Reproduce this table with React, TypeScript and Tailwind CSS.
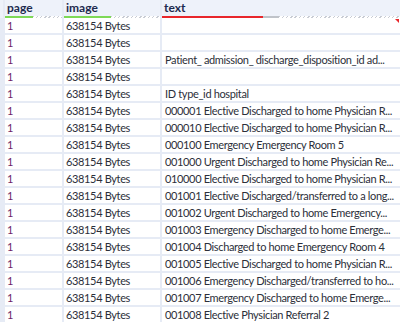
import React from "react";

const rows: string[] = [
  "",
  "",
  "Patient_ admission_ discharge_disposition_id ad...",
  "",
  "ID type_id hospital",
  "000001 Elective Discharged to home Physician R...",
  "000010 Elective Discharged to home Physician R...",
  "000100 Emergency Emergency Room 5",
  "001000 Urgent Discharged to home Physician Re...",
  "010000 Elective Discharged to home Physician R...",
  "001001 Elective Discharged/transferred to a long...",
  "001002 Urgent Discharged to home Emergency...",
  "001003 Emergency Discharged to home Emerge...",
  "001004 Discharged to home Emergency Room 4",
  "001005 Elective Discharged to home Physician R...",
  "001006 Emergency Discharged/transferred to ho...",
  "001007 Emergency Discharged to home Emerge...",
  "001008 Elective Physician Referral 2",
];

const dashed =
  "bg-[repeating-linear-gradient(135deg,#c8ccd4_0px,#c8ccd4_1px,#ffffff_1px,#ffffff_3px)]";

export default function App() {
  return (
    <div
      className="w-[400px] h-[322px] overflow-hidden bg-[#e6ebf5] text-[11px] relative"
      style={{ fontFamily: 'Lato, "Noto Sans", sans-serif' }}
    >
      <div className="grid grid-cols-[3px_57px_96px_1fr] gap-x-[2px]">
        {/* header */}
        <div className="h-[18px] bg-[#eef2fa]" />
        <div className="h-[18px] bg-[#eef2fa] flex flex-col">
          <div className="flex-1 pl-[2px] font-bold text-[12px] text-[#1d2b4f] leading-[16px]">page</div>
          <div className="flex h-[2px]">
            <div className="w-[28px] bg-[#7ed957]" />
            <div className={`flex-1 ${dashed}`} />
          </div>
        </div>
        <div className="h-[18px] bg-[#eef2fa] flex flex-col">
          <div className="flex-1 pl-[2px] font-bold text-[12px] text-[#1d2b4f] leading-[16px]">image</div>
          <div className="flex h-[2px]">
            <div className="w-[47px] bg-[#7ed957]" />
            <div className={`flex-1 ${dashed}`} />
          </div>
        </div>
        <div className="h-[18px] bg-[#eef2fa] flex flex-col">
          <div className="flex-1 pl-[2px] font-bold text-[12px] text-[#1d2b4f] leading-[16px]">text</div>
          <div className="flex h-[2px]">
            <div className="w-[101px] bg-[#e8262b]" />
            <div className="w-[16px] bg-[#bfc3c9]" />
            <div className={`flex-1 ${dashed}`} />
          </div>
        </div>
      </div>
      <div className="grid grid-cols-[3px_57px_96px_1fr] gap-x-[2px] gap-y-[2px] tracking-[-0.35px]">
        {rows.map((t, i) => (
          <React.Fragment key={i}>
            <div className="h-[15px] bg-[#e6ebf5]" />
            <div className="h-[15px] bg-white pl-[2px] leading-[15px] text-[#6e1f6a]">1</div>
            <div className="h-[15px] bg-white pl-[2px] leading-[15px] text-[#2c2f3a] whitespace-nowrap overflow-hidden">
              638154 Bytes
            </div>
            <div className="h-[15px] bg-white pl-[3px] leading-[15px] text-[#2c2f3a] whitespace-nowrap overflow-hidden">
              {t}
            </div>
          </React.Fragment>
        ))}
        <div className="h-[15px] bg-[#e6ebf5]" />
        <div className="h-[15px] bg-white" />
        <div className="h-[15px] bg-white" />
        <div className="h-[15px] bg-white" />
      </div>
      <div className="absolute right-[1px] top-[19px] w-0 h-0 border-l-[4px] border-l-transparent border-t-[4px] border-t-[#e8262b]" />
    </div>
  );
}
